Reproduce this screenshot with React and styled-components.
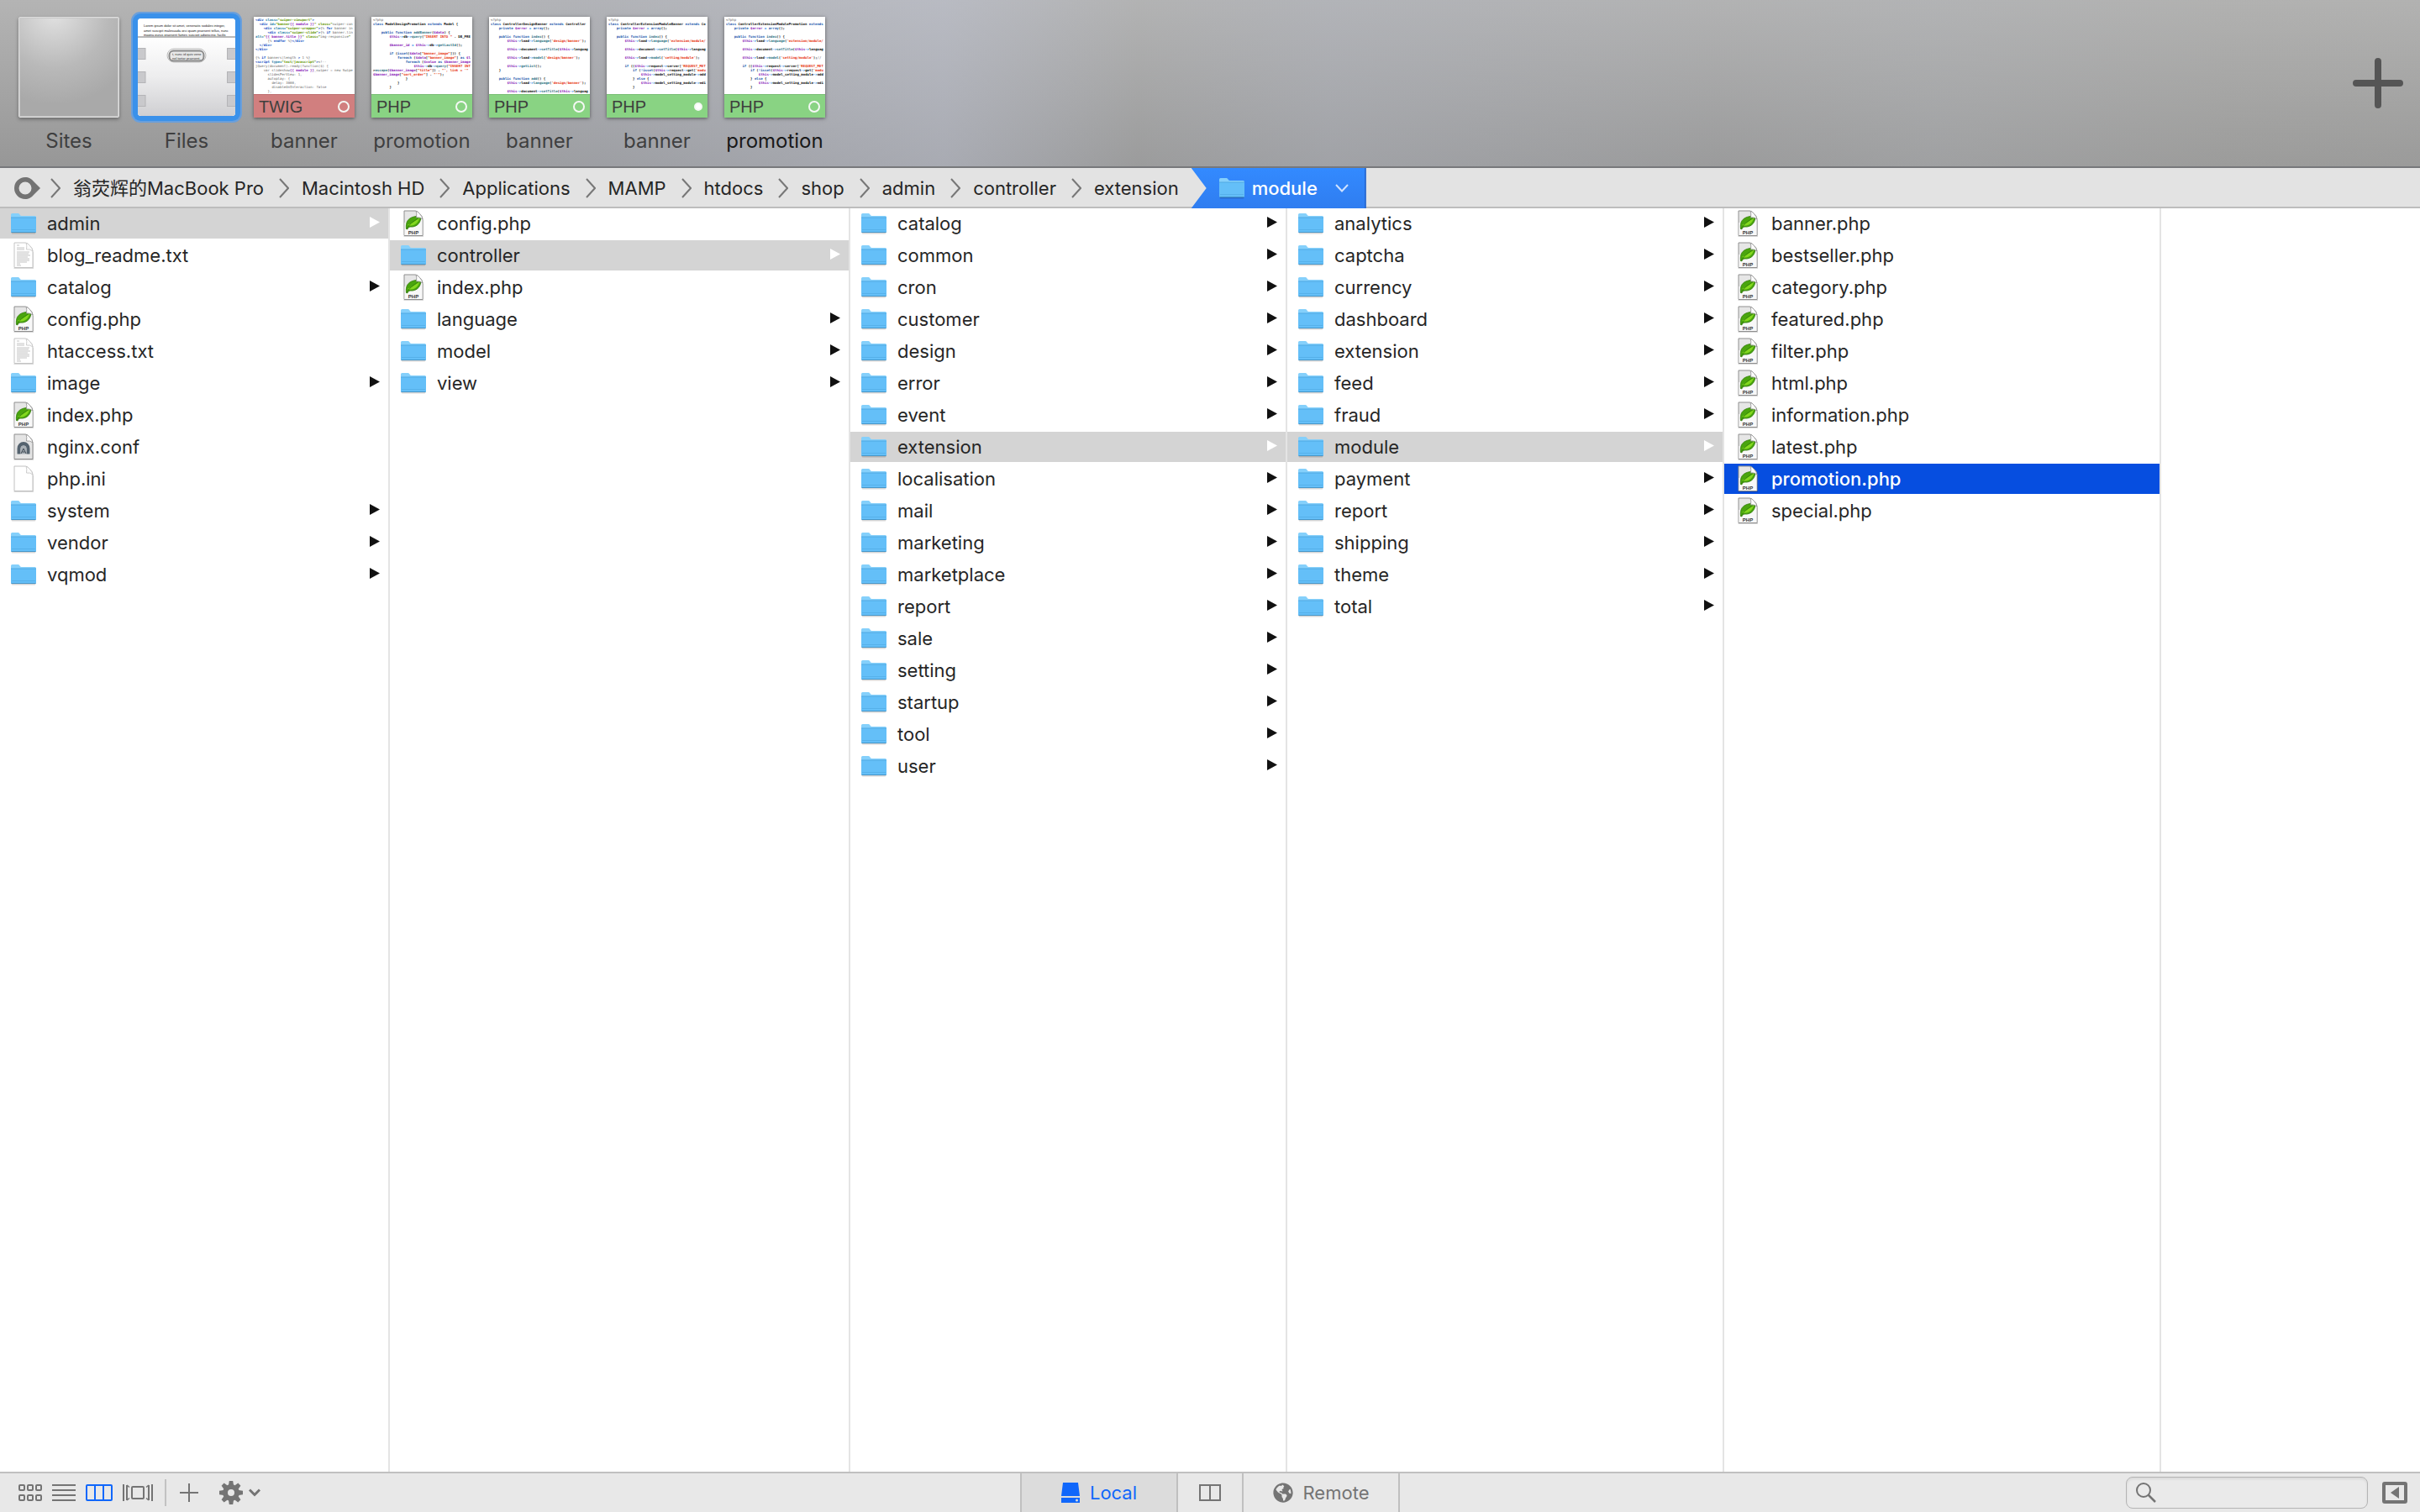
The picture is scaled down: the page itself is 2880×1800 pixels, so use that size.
import React from "react";
import styled, { createGlobalStyle, css } from "styled-components";
import { FaGlobeAmericas } from "react-icons/fa";

const SANS = `Inter, "Noto Sans CJK SC", sans-serif`;
const GREY = "#747474";
const BLUE = "#1067fb";

const Global = createGlobalStyle`
  *, *::before, *::after { box-sizing: border-box; }
  body { margin: 0; background: #fff; font-family: ${SANS}; }
  button, input { font: inherit; color: inherit; margin: 0; padding: 0; border: 0; background: none; }
  svg { display: block; flex: none; }
  ul { list-style: none; margin: 0; padding: 0; }
`;

const Page = styled.div`
  display: flex;
  flex-direction: column;
  min-height: 100vh;
  font-size: 22px;
  line-height: 28px;
  color: #262626;
`;

/* ---------- Tab strip ---------- */

const TabStrip = styled.header`
  display: flex;
  justify-content: space-between;
  height: 200px;
  padding: 0 20px 0 12px;
  border-bottom: 2px solid #77787b;
  background:
    linear-gradient(90deg, rgba(175, 180, 195, 0) 10%, rgba(172, 177, 192, 0.3) 25%, rgba(190, 195, 212, 0.45) 39%, rgba(172, 174, 176, 0.2) 47%, rgba(175, 179, 190, 0.4) 55%, rgba(170, 172, 175, 0.2) 71%, rgba(175, 178, 182, 0.35) 80%, rgba(170, 170, 166, 0.25) 92%, rgba(170, 170, 166, 0.2) 100%),
    linear-gradient(180deg, #b4b4b4, #979797);
`;

const TabList = styled.nav`
  display: flex;
  padding-top: 20px;
`;

const Tab = styled.button`
  display: flex;
  flex-direction: column;
  align-items: center;
  gap: 13px;
  width: 140px;
  font-size: 24px;
  line-height: 30px;
  color: ${(p) => (p.$current ? "#191919" : "#3f3f40")};
`;

const Thumb = styled.span`
  display: flex;
  flex-direction: column;
  width: 120px;
  height: 120px;
  overflow: hidden;
  background: #fff;
  box-shadow: 0 1px 4px rgba(0, 0, 0, 0.5);
`;

const SitesThumb = styled(Thumb)`
  border: 1px solid #dedede;
  border-radius: 2px;
  background: radial-gradient(circle at 35% -5%, #e2e2e2, #b9b9b9 45%, #a9a9a9 75%);
  box-shadow: inset 0 0 0 1px #c8c8c8, 0 2px 4px rgba(0, 0, 0, 0.35);
`;

const FilesThumb = styled(Thumb)`
  width: 116px;
  height: 116px;
  margin: 2px;
  border-radius: 4px;
  box-shadow: 0 0 0 6px #3a91ea, 0 0 0 8px #6a9fdb;
`;

const Code = styled.span`
  flex: 1;
  overflow: hidden;
  padding: 1px 2px 0;
  font-family: "DejaVu Sans Mono", monospace;
  font-size: 4px;
  line-height: 5px;
  text-align: left;
  white-space: pre;
  color: #222;
`;

const tokenColor = {
  variable: "#8a22b8",
  string: "#e6330e",
  tag: "#1550c4",
  keyword: "#1c58ad",
  operator: "#0f7eea",
  call: "#2e7184",
  attribute: "#1a7ca6",
  value: "#639600",
  muted: "#666",
  name: "#111",
};

const Token = styled.span`
  color: ${(p) => tokenColor[p.$kind]};
  font-weight: ${(p) => (p.$kind === "muted" ? 400 : 700)};
`;

const Badge = styled.span`
  display: flex;
  align-items: center;
  justify-content: space-between;
  height: 28px;
  padding: 0 6px;
  border-top: 1px solid ${(p) => (p.$kind === "TWIG" ? "#bf6f70" : "#79bf74")};
  background: ${(p) => (p.$kind === "TWIG" ? "#d17f7f" : "#89d383")};
  font-family: "Liberation Sans", Arial, sans-serif;
  font-size: 20px;
  line-height: 24px;
  color: #3e3f3d;
`;

const Dot = styled.span`
  width: ${(p) => (p.$filled ? 10 : 14)}px;
  height: ${(p) => (p.$filled ? 10 : 14)}px;
  border: 2px solid #f4f8f4;
  border-radius: 50%;
  background: ${(p) => (p.$filled ? "#fff" : "transparent")};
`;

const AddButton = styled.button`
  align-self: center;
  height: 60px;
`;

const phpRules = [
  ["muted", /^(<\?php|\/\/.*)/],
  ["variable", /^\$\w+/],
  ["string", /^("[^"\n]*"?|'[^'\n]*'?)/],
  ["operator", /^(->|=|!)/],
  ["keyword", /^(class|extends|public|private|function|if|else|foreach|as|return|array|isset)\b/],
  ["call", /^\w+(?=\()/],
  ["name", /^\w+/],
];
const twigRules = [
  ["tag", /^<\/?\w+|^\/?>/],
  ["attribute", /^(class|id|alt|type)=/],
  ["variable", /^\{\{[^}\n]*\}\}/],
  ["value", /^"[^"{\n]*"?/],
  ["tag", /^(for|if|endfor)\b/],
  ["muted", /^\w+/],
];

function tokenize(text, rules, fallback) {
  const out = [];
  let rest = text;
  while (rest) {
    let hit = null;
    for (const [kind, rule] of rules) {
      const m = rule.exec(rest);
      if (m && m[0]) {
        hit = [kind, m[0]];
        break;
      }
    }
    if (!hit) hit = [fallback, rest[0]];
    out.push(hit);
    rest = rest.slice(hit[1].length);
  }
  return out;
}

/* A thumbnail has room for 18 lines of 48 characters. */
const preview = (code) => code.split("\n").slice(0, 18).map((line) => line.slice(0, 48)).join("\n");

const twigBanner = `<div class="swiper-viewport">
  <div id="banner{{ module }}" class="swiper-container">
    <div class="swiper-wrapper">{% for banner in banners %}
      <div class="swiper-slide">{% if banner.link %}
alt="{{ banner.title }}" class="img-responsive"
      {% endfor %}</div>
  </div>
</div>

{% if banners|length > 1 %}
<script type="text/javascript"><!--
jQuery(document).ready(function($) {
    var slideshow{{ module }}_swiper = new Swiper(
      slidesPerView: 1,
      autoplay: {
        delay: 3000,
        disableOnInteraction: false
      },
      loop: true`;

const modelPromotion = `<?php
class ModelDesignPromotion extends Model {

    public function addBanner($data) {
        $this->db->query("INSERT INTO " . DB_PREFIX

        $banner_id = $this->db->getLastId();

        if (isset($data["banner_image"])) {
            foreach ($data["banner_image"] as $language
                foreach ($value as $banner_image) {
                    $this->db->query("INSERT INTO
>escape($banner_image["title"]) . "', link = '"
$banner_image["sort_order"] . "'");
                }
            }
        }

        return $banner_id;`;

const designBanner = `<?php
class ControllerDesignBanner extends Controller {
    private $error = array();

    public function index() {
        $this->load->language('design/banner');

        $this->document->setTitle($this->language

        $this->load->model('design/banner');

        $this->getList();
    }

    public function add() {
        $this->load->language('design/banner');

        $this->document->setTitle($this->language`;

const moduleController = (name, note) => `<?php
class ControllerExtensionModule${name} extends Controller
    private $error = array();

    public function index() {
        $this->load->language('extension/module/

        $this->document->setTitle($this->language

        $this->load->model('setting/module');${note}

        if (($this->request->server['REQUEST_METHOD
            if (!isset($this->request->get['module
                $this->model_setting_module->add
            } else {
                $this->model_setting_module->edit
            }

            $this->session->data['success'] = $this`;

function CodeThumb({ kind, code, filled }) {
  const rules = kind === "TWIG" ? twigRules : phpRules;
  const fallback = kind === "TWIG" ? "muted" : "name";
  return (
    <Thumb>
      <Code aria-hidden="true">
        {tokenize(preview(code), rules, fallback).map(([k, t], i) => (
          <Token key={i} $kind={k}>{t}</Token>
        ))}
      </Code>
      <Badge $kind={kind}>
        {kind}
        <Dot $filled={filled} />
      </Badge>
    </Thumb>
  );
}

function CabinetDrawing() {
  return (
    <svg width="116" height="116" viewBox="0 0 116 116" aria-hidden="true">
      <defs>
        <linearGradient id="cabinet" x1="0" y1="0" x2="0" y2="1">
          <stop offset="0" stopColor="#fff" />
          <stop offset="0.5" stopColor="#ededee" />
          <stop offset="1" stopColor="#cfcfd2" />
        </linearGradient>
      </defs>
      <rect width="116" height="116" fill="#fff" />
      <g fontFamily="Liberation Sans, sans-serif" fontSize="4" fill="#111">
        <text x="7" y="10">Lorem ipsum dolor sit amet, venenatis sodales integer,</text>
        <text x="7" y="16">amet suscipit malesuada orci quam praesent tellus, nunc</text>
        <text x="7" y="21">magna purus praesent fames suscipit adipiscing, facilis</text>
      </g>
      <rect y="22" width="116" height="94" fill="url(#cabinet)" />
      <rect y="21" width="116" height="2" fill="#b9b9b9" />
      {[35, 63, 91].map((y) => (
        <g key={y} fill="#c9c9cc" stroke="#b4b4b7" strokeWidth="1">
          <rect x="-1" y={y + 0.5} width="10" height="13" />
          <rect x="106.500" y={y + 0.5} width="10" height="13" />
        </g>
      ))}
      <rect x="35" y="36" width="46" height="16" rx="8" fill="#f7f7f7" stroke="#bdbdbd" />
      <rect x="37.500" y="38.500" width="41" height="12" rx="5" fill="#e8e8e8" stroke="#8a8a8a" strokeWidth="2" />
      <g fontFamily="Liberation Sans, sans-serif" fontSize="4" fill="#333">
        <text x="41" y="44">t, nunc id quis vene</text>
        <text x="41" y="49">nel tortor praesent,</text>
      </g>
    </svg>
  );
}

/* ---------- File icons ---------- */

function FolderIcon() {
  return (
    <svg width="30" height="26" viewBox="0 0 30 26" aria-hidden="true">
      <rect x="0.500" y="5" width="29" height="20.500" rx="1.500" fill="#000" opacity="0.16" />
      <path d="M0 2.500Q0 1 1.500 1H8.500Q9.500 1 10.200 2L11 3.300Q11.500 4 12.500 4H28.500Q30 4 30 5.500V10H0Z" fill="#85d0fb" />
      <path d="M0 6H30V22.500Q30 24 28.500 24H1.500Q0 24 0 22.500Z" fill="#64bff8" />
      <path d="M0 6H30" stroke="#4fa9e2" strokeWidth="1" />
      <path d="M1 20.500H29" stroke="#56b1ea" strokeWidth="1" />
      <path d="M0.500 23.500H29.500" stroke="#4697ca" strokeWidth="1" />
    </svg>
  );
}

function Sheet({ fill = "#fff", stroke = "#a3a3a3", children }) {
  return (
    <svg width="24" height="32" viewBox="0 0 24 32" aria-hidden="true">
      <path d="M0.500 31.500H23.500V12" fill="none" stroke="#000" strokeWidth="1" opacity="0.15" />
      <path d="M1 1H14.500Q17 1.500 19.500 4.500Q23 8 23 11V30.500H1Z" fill={fill} stroke={stroke} />
      {children}
      <path d="M15 1.200Q16.300 4 15.500 9Q20 8.300 23 11Q22.500 7.500 19.500 4.500Q17.500 2 15 1.200Z" fill="#fbfbfb" stroke={stroke} strokeWidth="0.800" />
    </svg>
  );
}

function PhpIcon() {
  return (
    <Sheet fill="#e6e6e6" stroke="#8f8f8f">
      <path d="M1.500 15L22.500 11V30H1.500Z" fill="#f8f8f8" />
      <path d="M3.500 22.500C2.500 13 6 7.500 20.500 7C22 14 16.500 21 8 20C6 20.500 5.500 21.500 5 22.800Z" fill="#4aa50e" stroke="#2f7a08" strokeWidth="0.800" />
      <path d="M5 18C9 16.500 14 13 19 9C19 14 14 19 7.500 18.800Z" fill="#83d81f" />
      <path d="M4.200 22.500C6 18 12 13 18 10" fill="none" stroke="#2f7a08" strokeWidth="0.800" />
      <text x="12" y="29" textAnchor="middle" fontFamily="Liberation Sans, sans-serif" fontWeight="700" fontSize="6" fill="#333">PHP</text>
    </Sheet>
  );
}

function TextIcon() {
  return (
    <Sheet stroke="#c4c4c4">
      <path d="M4 4H7M4 7H13M4 9H13M4 12H19M4 14H18M4 16H20M4 18H17M4 20H19M4 22H19M4 24H16M4 26H8M4 28H9" stroke="#b5b5b5" strokeWidth="0.800" />
    </Sheet>
  );
}

function ConfIcon() {
  return (
    <Sheet fill="#e4e4e4" stroke="#8f8f8f">
      <path d="M4.500 24.500V18A7.500 8 0 0 1 19.500 18V24.500H15.500V18.500A3.500 4 0 0 0 8.500 18.500V24.500Z" fill="#55636f" />
      <path d="M8.500 24.500V18.500A3.500 4 0 0 1 15.500 18.500V24.500Z" fill="#a9b0b6" />
      <path d="M9 24L12 18L15 24M10.500 22H13.500" fill="none" stroke="#3f4a54" strokeWidth="1" />
    </Sheet>
  );
}

const icons = {
  folder: FolderIcon,
  php: PhpIcon,
  txt: TextIcon,
  conf: ConfIcon,
  ini: () => <Sheet stroke="#c0c0c0" />,
};

/* ---------- Path bar ---------- */

const PathBar = styled.nav`
  display: flex;
  align-items: center;
  height: 48px;
  padding-left: 17px;
  background: #e3e3e3;
  box-shadow: inset 0 -2px #bdbdbd;
`;

const Crumb = styled.a`
  padding: 0 18px 0 15px;
  color: inherit;
  text-decoration: none;
  white-space: nowrap;

  &:last-of-type { padding-right: 15px; }
`;

const HomeButton = styled.button`
  padding-right: 12px;
`;

const CurrentCrumb = styled.button`
  display: flex;
  align-items: center;
  align-self: stretch;
  gap: 9px;
  padding: 0 19px 0 33px;
  border-right: 2px solid #2467d3;
  background: linear-gradient(180deg, #338aff, #2f7df0);
  clip-path: polygon(0 0, 100% 0, 100% 100%, 0 100%, 18px 50%);
  color: #fff;
  font-weight: 500;
`;

const CrumbName = styled.span`
  padding-right: 12px;
`;

function Chevron() {
  return (
    <svg width="12" height="24" viewBox="0 0 12 24" aria-hidden="true">
      <path d="M1 1L11 12L1 23" fill="none" stroke="#777" strokeWidth="2" />
    </svg>
  );
}

/* ---------- Columns ---------- */

const Columns = styled.main`
  flex: 1;
  display: flex;
`;

const Column = styled.ul`
  flex: 0 0 ${(p) => p.$width}px;
  border-right: 2px solid #e4e4e4;
`;

const Row = styled.li`
  padding-bottom: 2px;
`;

const RowButton = styled.button`
  display: flex;
  align-items: center;
  width: 100%;
  height: 36px;
  padding: 0 10px 0 13px;
  text-align: left;
  ${(p) => p.$state === "open" && css`background: #d4d4d4;`}
  ${(p) => p.$state === "active" && css`background: #064ee0; color: #fff; font-weight: 500;`}
`;

const IconBox = styled.span`
  display: flex;
  justify-content: center;
  width: 30px;
`;

const FileName = styled.span`
  flex: 1;
  padding-left: 13px;
`;

function Arrow({ light }) {
  return (
    <svg width="12" height="16" viewBox="0 0 12 16" aria-hidden="true">
      <path d="M0 0L12 6.500L0 13Z" fill={light ? "#fff" : "#111"} />
    </svg>
  );
}

const columns = [
  { width: 464, open: "admin", items: "admin/ blog_readme.txt catalog/ config.php htaccess.txt image/ index.php nginx.conf php.ini system/ vendor/ vqmod/" },
  { width: 548, open: "controller", items: "config.php controller/ index.php language/ model/ view/" },
  { width: 520, open: "extension", items: "catalog/ common/ cron/ customer/ design/ error/ event/ extension/ localisation/ mail/ marketing/ marketplace/ report/ sale/ setting/ startup/ tool/ user/" },
  { width: 520, open: "module", items: "analytics/ captcha/ currency/ dashboard/ extension/ feed/ fraud/ module/ payment/ report/ shipping/ theme/ total/" },
  { width: 520, active: "promotion.php", items: "banner.php bestseller.php category.php featured.php filter.php html.php information.php latest.php promotion.php special.php" },
];

function FileColumn({ width, open, active, items }) {
  return (
    <Column $width={width}>
      {items.split(" ").map((item) => {
        const folder = item.endsWith("/");
        const name = folder ? item.slice(0, -1) : item;
        const Icon = icons[folder ? "folder" : name.split(".").pop()];
        const state = name === open ? "open" : name === active ? "active" : undefined;
        return (
          <Row key={name}>
            <RowButton type="button" $state={state}>
              <IconBox><Icon /></IconBox>
              <FileName>{name}</FileName>
              {folder && <Arrow light={state === "open"} />}
            </RowButton>
          </Row>
        );
      })}
    </Column>
  );
}

/* ---------- Status bar ---------- */

const StatusBar = styled.footer`
  display: grid;
  grid-template-columns: 1fr auto 1fr;
  height: 48px;
  border-top: 2px solid #c0c0c0;
  background: #e8e8e8;
  color: ${GREY};
`;

const Tools = styled.div`
  display: flex;
  align-items: center;
  padding-left: 22px;
`;

const ViewSwitch = styled.div`
  display: flex;
  align-items: center;
  gap: 12px;
`;

const Divider = styled.span`
  width: 2px;
  height: 32px;
  margin: 0 16px 0 14px;
  background: #c2c2c2;
`;

const ToolButton = styled.button`
  display: flex;
  align-items: center;
  gap: 7px;
  color: ${(p) => (p.$on ? BLUE : GREY)};
`;

const ActionGroup = styled.div`
  display: flex;
  align-items: center;
  gap: 25px;
`;

const Modes = styled.div`
  display: flex;
  border-left: 2px solid #c0c0c0;
`;

const Mode = styled.button`
  display: flex;
  align-items: center;
  justify-content: center;
  gap: 12px;
  width: ${(p) => (p.$compact ? 78 : 186)}px;
  border-right: 2px solid #c0c0c0;
  background: ${(p) => (p.$on ? "#dcdcdc" : "transparent")};
  color: ${(p) => (p.$on ? BLUE : GREY)};
`;

const Finder = styled.div`
  display: flex;
  align-items: center;
  justify-content: flex-end;
  gap: 17px;
  padding-right: 15px;
`;

const SearchBox = styled.label`
  display: flex;
  align-items: center;
  gap: 8px;
  width: 288px;
  height: 38px;
  padding: 0 11px;
  border: 1px solid #b4b4b4;
  border-radius: 8px;
  background: #eaeaea;
  box-shadow: inset 0 2px 3px rgba(0, 0, 0, 0.08);

  input { flex: 1; min-width: 0; outline: none; }
`;

const Icon = ({ w, h, children, sw = 2 }) => (
  <svg width={w} height={h} viewBox={`0 0 ${w} ${h}`} fill="none" stroke="currentColor" strokeWidth={sw} aria-hidden="true">
    {children}
  </svg>
);

const crumbs = ["翁荧辉的MacBook Pro", "Macintosh HD", "Applications", "MAMP", "htdocs", "shop", "admin", "controller", "extension"];

export default function App() {
  return (
    <Page>
      <Global />
      <TabStrip>
        <TabList aria-label="Open documents">
          <Tab type="button"><SitesThumb />Sites</Tab>
          <Tab type="button"><FilesThumb><CabinetDrawing /></FilesThumb>Files</Tab>
          <Tab type="button"><CodeThumb kind="TWIG" code={twigBanner} />banner</Tab>
          <Tab type="button"><CodeThumb kind="PHP" code={modelPromotion} />promotion</Tab>
          <Tab type="button"><CodeThumb kind="PHP" code={designBanner} />banner</Tab>
          <Tab type="button"><CodeThumb kind="PHP" code={moduleController("Banner", "")} filled />banner</Tab>
          <Tab type="button" $current><CodeThumb kind="PHP" code={moduleController("Promotion", "//")} />promotion</Tab>
        </TabList>
        <AddButton type="button" aria-label="New tab">
          <svg width="60" height="60" viewBox="0 0 60 60" aria-hidden="true">
            <path d="M30 4V56M4 30H56" stroke="#555" strokeWidth="8" strokeLinecap="round" />
          </svg>
        </AddButton>
      </TabStrip>

      <PathBar aria-label="Path">
        <HomeButton type="button" aria-label="Root">
          <svg width="31" height="26" viewBox="0 0 31 26" aria-hidden="true">
            <path fillRule="evenodd" fill="#737373" d="M13 0C17.500 0 20 1.500 23 5L31 13L23 21C20 24.500 17.500 26 13 26A13 13 0 0 1 13 0ZM13 5.500A7.500 7.500 0 1 0 13 20.500A7.500 7.500 0 1 0 13 5.500Z" />
          </svg>
        </HomeButton>
        {crumbs.map((name) => (
          <React.Fragment key={name}>
            <Chevron />
            <Crumb href="#">{name}</Crumb>
          </React.Fragment>
        ))}
        <CurrentCrumb type="button">
          <FolderIcon />
          <CrumbName>module</CrumbName>
          <svg width="16" height="10" viewBox="0 0 16 10" aria-hidden="true">
            <path d="M1 1L8 8.500L15 1" fill="none" stroke="#cfe2ff" strokeWidth="2" />
          </svg>
        </CurrentCrumb>
      </PathBar>

      <Columns>
        {columns.map((c) => <FileColumn key={c.width + c.items} {...c} />)}
      </Columns>

      <StatusBar>
        <Tools>
          <ViewSwitch>
            <ToolButton type="button" aria-label="Icon view">
              <Icon w={28} h={20}>
                {[0, 10, 20].map((x) => [0, 12].map((y) => (
                  <rect key={x + "-" + y} x={x + 1} y={y + 1} width="6" height="6" rx="1" />
                )))}
              </Icon>
            </ToolButton>
            <ToolButton type="button" aria-label="List view">
              <Icon w={28} h={20}><path d="M0 1H28M0 7H28M0 13H28M0 19H28" /></Icon>
            </ToolButton>
            <ToolButton type="button" aria-label="Column view" $on>
              <Icon w={32} h={20}><rect x="1" y="1" width="30" height="18" rx="1" /><path d="M11 1V19M21 1V19" /></Icon>
            </ToolButton>
            <ToolButton type="button" aria-label="Cover flow view">
              <Icon w={36} h={20}>
                <rect x="11" y="3" width="14" height="14" rx="1" />
                <path d="M1 0V20M35 0V20M5 1V19M31 1V19" />
                <path d="M5 1L8 3.500M5 19L8 16.500M31 1L28 3.500M31 19L28 16.500" strokeWidth="1.500" />
              </Icon>
            </ToolButton>
          </ViewSwitch>
          <Divider />
          <ActionGroup>
            <ToolButton type="button" aria-label="Add">
              <Icon w={22} h={22}><path d="M11 0V22M0 11H22" /></Icon>
            </ToolButton>
            <ToolButton type="button" aria-label="Actions">
              <svg width="28" height="28" viewBox="-14 -14 28 28" fill={GREY} aria-hidden="true">
                <path fillRule="evenodd" d="M0 -10A10 10 0 1 0 0 10A10 10 0 1 0 0 -10ZM0 -4A4 4 0 1 1 0 4A4 4 0 1 1 0 -4Z" />
                {[0, 45, 90, 135, 180, 225, 270, 315].map((a) => (
                  <path key={a} d="M-3 -9L-2.200 -14H2.200L3 -9Z" transform={`rotate(${a})`} />
                ))}
              </svg>
              <Icon w={14} h={10} sw={3}><path d="M1 1.500L7 7.500L13 1.500" /></Icon>
            </ToolButton>
          </ActionGroup>
        </Tools>

        <Modes>
          <Mode type="button" $on>
            <svg width="22" height="24" viewBox="0 0 22 24" fill={BLUE} aria-hidden="true">
              <path d="M2 0H20L22 16H0Z" />
              <path fillRule="evenodd" d="M0 18H22V24H0ZM18.500 19.500A1.500 1.500 0 1 0 18.500 22.500A1.500 1.500 0 1 0 18.500 19.500Z" />
            </svg>
            Local
          </Mode>
          <Mode type="button" $compact aria-label="Split view">
            <Icon w={26} h={20}><path d="M1 1H25V19H1ZM13 1V19" /></Icon>
          </Mode>
          <Mode type="button">
            <FaGlobeAmericas size={24} aria-hidden="true" />
            Remote
          </Mode>
        </Modes>

        <Finder>
          <SearchBox>
            <Icon w={24} h={24}>
              <circle cx="9" cy="9" r="8" />
              <path d="M14.500 14.500L23 23" strokeWidth="2.500" />
            </Icon>
            <input type="text" aria-label="Search files" />
          </SearchBox>
          <ToolButton type="button" aria-label="Toggle sidebar">
            <svg width="30" height="26" viewBox="0 0 30 26" aria-hidden="true">
              <rect x="2" y="2" width="26" height="22" rx="1" fill="none" stroke={GREY} strokeWidth="4" />
              <path d="M20 6V20L10 13Z" fill={GREY} />
            </svg>
          </ToolButton>
        </Finder>
      </StatusBar>
    </Page>
  );
}
